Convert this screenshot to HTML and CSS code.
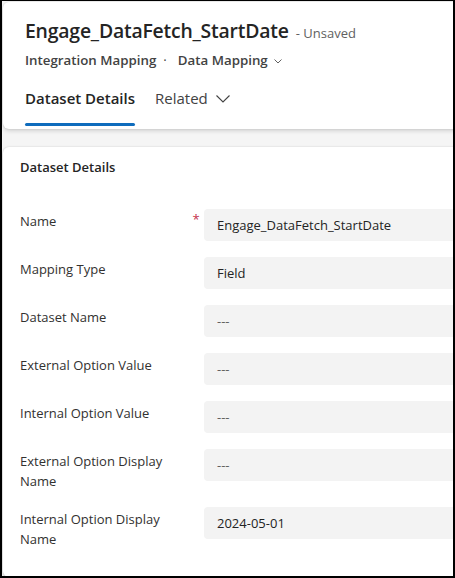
FILE: index.html
```html
<!DOCTYPE html>
<html lang="en">
<head>
  <meta charset="UTF-8" />
  <meta name="viewport" content="width=device-width, initial-scale=1.0" />
  <title>Engage_DataFetch_StartDate</title>
  <link rel="stylesheet" href="styles.css">
</head>
<body>
  <div class="frame">
    <div class="header card">
      <div class="title-row">
        <h1>Engage_DataFetch_StartDate</h1>
        <span class="status">- Unsaved</span>
      </div>
      <div class="crumbs">
        <span>Integration Mapping</span>
        <span class="dot">·</span>
        <span class="form-pick">Data Mapping
          <svg class="chev-sm" width="8" height="5" viewBox="0 0 8 5"><path d="M0.5 0.5 L4 4 L7.5 0.5" fill="none" stroke="#616161" stroke-width="1"/></svg>
        </span>
      </div>
      <div class="tabs">
        <div class="tab active">Dataset Details</div>
        <div class="tab">Related
          <svg class="chev" width="14" height="8" viewBox="0 0 14 8"><path d="M0.5 0.5 L7 7 L13.5 0.5" fill="none" stroke="#424242" stroke-width="1.1"/></svg>
        </div>
      </div>
    </div>

    <div class="section card">
      <h2>Dataset Details</h2>
      <div class="fields">
        <div class="row">
          <div class="label">Name</div>
          <div class="req">*</div>
          <div class="value">Engage_DataFetch_StartDate</div>
        </div>
        <div class="row">
          <div class="label">Mapping Type</div>
          <div class="req"></div>
          <div class="value">Field</div>
        </div>
        <div class="row">
          <div class="label">Dataset Name</div>
          <div class="req"></div>
          <div class="value empty">---</div>
        </div>
        <div class="row">
          <div class="label">External Option Value</div>
          <div class="req"></div>
          <div class="value empty">---</div>
        </div>
        <div class="row">
          <div class="label">Internal Option Value</div>
          <div class="req"></div>
          <div class="value empty">---</div>
        </div>
        <div class="row">
          <div class="label">External Option Display Name</div>
          <div class="req"></div>
          <div class="value empty">---</div>
        </div>
        <div class="row">
          <div class="label">Internal Option Display Name</div>
          <div class="req"></div>
          <div class="value">2024-05-01</div>
        </div>
      </div>
    </div>
  </div>
</body>
</html>
```

FILE: styles.css
```css
html, body { margin: 0; padding: 0; }
body { font-family: "Open Sans", "Noto Sans", sans-serif; color: #242424; width: 455px; height: 578px; overflow: hidden; }
.frame { box-sizing: border-box; width: 455px; height: 578px; border: 2px solid #000; border-top-width: 1px; background: #f5f5f5; padding: 1px 0 0 1px; overflow: hidden; }
.card { background: #fff; border-radius: 6px; box-shadow: 0 0 2px rgba(0,0,0,0.12), 0 2px 4px rgba(0,0,0,0.14); width: 470px; box-sizing: border-box; }

.header { padding: 15px 22px 0 22px; height: 127px; }
.title-row { display: flex; align-items: baseline; gap: 7px; }
h1 { margin: 0; font-size: 19.4px; font-weight: 600; line-height: 28px; color: #242424; letter-spacing: -0.2px; }
.status { font-size: 13px; color: #616161; }
.crumbs { display: flex; align-items: center; font-size: 13.3px; font-weight: 600; color: #424242; margin-top: 5px; line-height: 20px; }
.dot { margin: 0 11px 0 7px; font-weight: 400; }
.form-pick { display: flex; align-items: center; gap: 6px; }
.chev-sm { margin-top: 2px; }
.tabs { display: flex; margin-top: 17px; gap: 20px; }
.tab { font-size: 15px; line-height: 22px; padding-bottom: 17px; display: flex; align-items: flex-start; gap: 8px; color: #424242; }
.tab.active { font-weight: 600; color: #242424; position: relative; }
.tab.active::after { content: ""; position: absolute; left: 0; right: 0; bottom: 0; height: 3px; border-radius: 2px; background: #0f6cbd; }
.chev { margin-top: 8px; }

.section { margin-top: 18px; padding: 10px 0 28px 17px; }
h2 { margin: 0; font-size: 13px; font-weight: 600; line-height: 20px; color: #242424; }
.fields { margin-top: 32px; display: flex; flex-direction: column; gap: 16px; }
.row { display: flex; align-items: flex-start; }
.label { width: 168px; font-size: 13px; line-height: 20px; padding-top: 2px; color: #323130; }
.req { width: 16px; color: #c4314b; font-size: 13px; line-height: 20px; text-align: center; }
.value { flex: 1; height: 32px; background: #f3f3f3; border-radius: 4px; padding-left: 13px; font-size: 13px; line-height: 32px; color: #242424; }
.value.empty { color: #616161; }
```
